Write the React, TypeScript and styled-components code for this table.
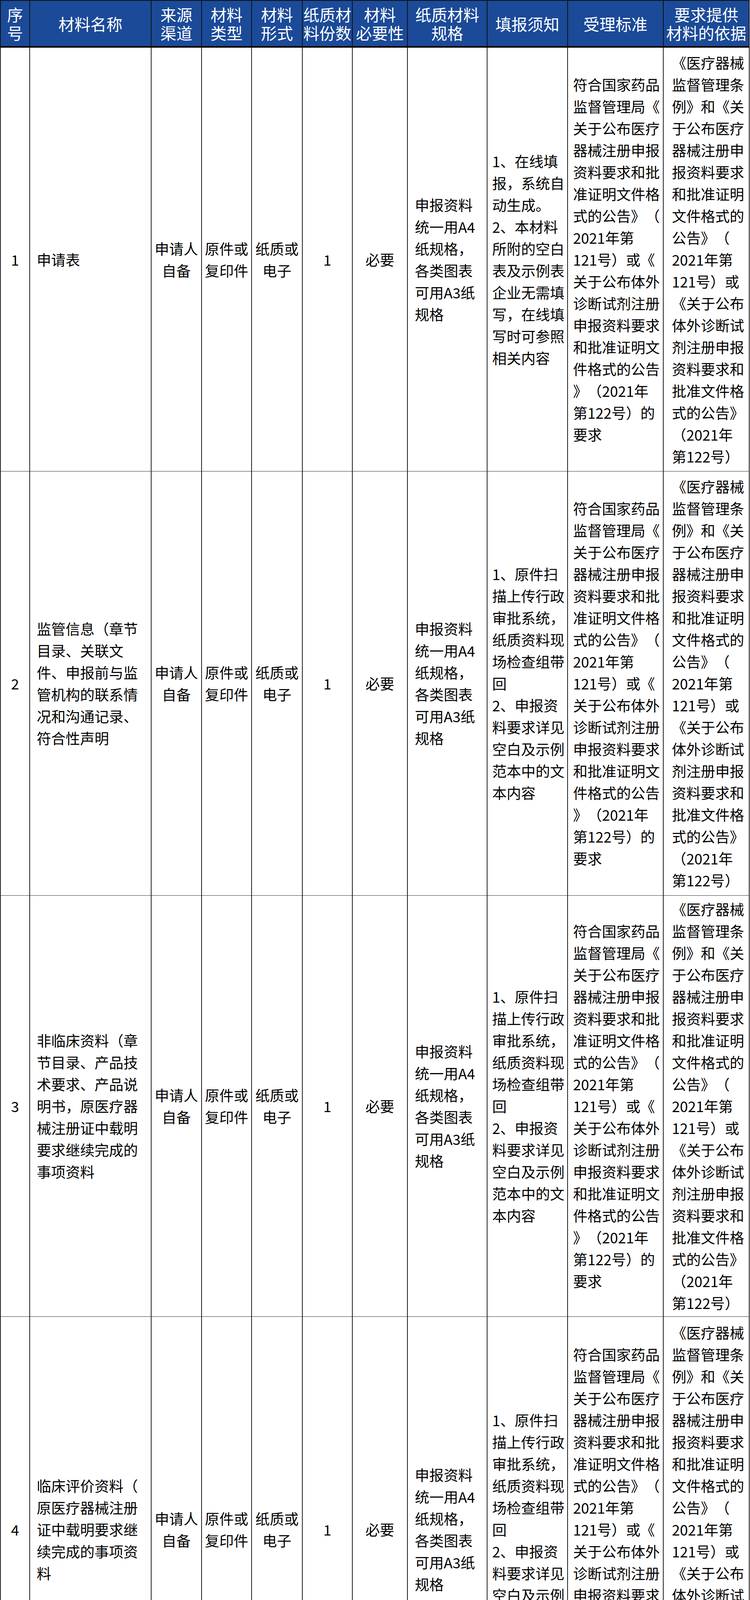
import React from 'react'
import styled, { createGlobalStyle } from 'styled-components'

type Align = 'left' | 'center'

type Column = { title: string[]; width: number; align: Align; pad: number }

type Material = {
  no: string
  name: string[]
  notes: string[]
  height: number
}

const columns: Column[] = [
  { title: ['序', '号'], width: 75, align: 'center', pad: 0 },
  { title: ['材料名称'], width: 311, align: 'left', pad: 17 },
  { title: ['来源', '渠道'], width: 129, align: 'center', pad: 0 },
  { title: ['材料', '类型'], width: 128, align: 'center', pad: 0 },
  { title: ['材料', '形式'], width: 130, align: 'center', pad: 0 },
  { title: ['纸质材', '料份数'], width: 128, align: 'center', pad: 0 },
  { title: ['材料', '必要性'], width: 141, align: 'center', pad: 0 },
  { title: ['纸质材料', '规格'], width: 204, align: 'left', pad: 18 },
  { title: ['填报须知'], width: 206, align: 'left', pad: 12 },
  { title: ['受理标准'], width: 245, align: 'left', pad: 13 },
  { title: ['要求提供', '材料的依据'], width: 220, align: 'left', pad: 21 },
]

const source = ['申请人', '自备']
const kind = ['原件或', '复印件']
const form = ['纸质或', '电子']
const copies = ['1']
const necessity = ['必要']
const spec = ['申报资料', '统一用A4', '纸规格，', '各类图表', '可用A3纸', '规格']

const standard = [
  '符合国家药品',
  '监督管理局《',
  '关于公布医疗',
  '器械注册申报',
  '资料要求和批',
  '准证明文件格',
  '式的公告》（',
  '2021年第',
  '121号）或《',
  '关于公布体外',
  '诊断试剂注册',
  '申报资料要求',
  '和批准证明文',
  '件格式的公告',
  '》（2021年',
  '第122号）的',
  '要求',
]

const basis = [
  '《医疗器械',
  '监督管理条',
  '例》和《关',
  '于公布医疗',
  '器械注册申',
  '报资料要求',
  '和批准证明',
  '文件格式的',
  '公告》（',
  '2021年第',
  '121号）或',
  '《关于公布',
  '体外诊断试',
  '剂注册申报',
  '资料要求和',
  '批准文件格',
  '式的公告》',
  '（2021年',
  '第122号）',
]

const onlineNotes = [
  '1、在线填',
  '报，系统自',
  '动生成。',
  '2、本材料',
  '所附的空白',
  '表及示例表',
  '企业无需填',
  '写，在线填',
  '写时可参照',
  '相关内容',
]

const scanNotes = [
  '1、原件扫',
  '描上传行政',
  '审批系统，',
  '纸质资料现',
  '场检查组带',
  '回',
  '2、申报资',
  '料要求详见',
  '空白及示例',
  '范本中的文',
  '本内容',
]

const materials: Material[] = [
  { no: '1', name: ['申请表'], notes: onlineNotes, height: 1086 },
  {
    no: '2',
    name: ['监管信息（章节', '目录、关联文', '件、申报前与监', '管机构的联系情', '况和沟通记录、', '符合性声明'],
    notes: scanNotes,
    height: 1086,
  },
  {
    no: '3',
    name: [
      '非临床资料（章',
      '节目录、产品技',
      '术要求、产品说',
      '明书，原医疗器',
      '械注册证中载明',
      '要求继续完成的',
      '事项资料',
    ],
    notes: scanNotes,
    height: 1078,
  },
  {
    no: '4',
    name: ['临床评价资料（', '原医疗器械注册', '证中载明要求继', '续完成的事项资', '料'],
    notes: scanNotes,
    height: 1090,
  },
]

const GlobalStyle = createGlobalStyle`
  html, body {
    margin: 0;
    padding: 0;
    background: #ffffff;
  }
  body {
    font-family: "Noto Sans CJK SC", "Noto Sans", "Liberation Sans", sans-serif;
    color: #000000;
  }
`

const Sheet = styled.table`
  border-collapse: collapse;
  table-layout: fixed;
  width: 1917px;
  text-spacing-trim: space-all;
`

const HeadRow = styled.tr`
  height: 119px;
`

const HeadCell = styled.th`
  background: #1b4a98;
  color: #ffffff;
  font-size: 41px;
  line-height: 47px;
  font-weight: 400;
  text-align: center;
  vertical-align: middle;
  white-space: nowrap;
  padding: 0;
  border: 2px solid #111111;
  border-bottom: 4px solid #000000;
`

const BodyRow = styled.tr<{ $height: number }>`
  height: ${(p) => p.$height}px;
`

const Cell = styled.td<{ $align: Align; $pad: number }>`
  font-size: 37px;
  line-height: 56px;
  text-align: ${(p) => p.$align};
  padding: 3px 0 3px ${(p) => p.$pad}px;
  vertical-align: middle;
  white-space: nowrap;
  border-left: 2px solid #1e1e1e;
  border-right: 2px solid #1e1e1e;
  border-top: 1px solid #333333;
  border-bottom: 1px solid #333333;
`

const Line = styled.span`
  display: block;
`

function Lines(props: { lines: string[] }) {
  return (
    <>
      {props.lines.map((line, i) => (
        <Line key={i}>{line}</Line>
      ))}
    </>
  )
}

function Title(props: { lines: string[] }) {
  return (
    <>
      {props.lines.map((line, i) => (
        <React.Fragment key={i}>
          {i > 0 && <br />}
          {line}
        </React.Fragment>
      ))}
    </>
  )
}

function MaterialRow(props: { item: Material }) {
  const cells = [
    [props.item.no],
    props.item.name,
    source,
    kind,
    form,
    copies,
    necessity,
    spec,
    props.item.notes,
    standard,
    basis,
  ]
  return (
    <BodyRow $height={props.item.height}>
      {cells.map((lines, i) => (
        <Cell key={i} $align={columns[i].align} $pad={columns[i].pad}>
          <Lines lines={lines} />
        </Cell>
      ))}
    </BodyRow>
  )
}

export default function App() {
  return (
    <>
      <GlobalStyle />
      <Sheet>
        <colgroup>
          {columns.map((col, i) => (
            <col key={i} style={{ width: col.width }} />
          ))}
        </colgroup>
        <thead>
          <HeadRow>
            {columns.map((col, i) => (
              <HeadCell key={i}>
                <Title lines={col.title} />
              </HeadCell>
            ))}
          </HeadRow>
        </thead>
        <tbody>
          {materials.map((item) => (
            <MaterialRow key={item.no} item={item} />
          ))}
        </tbody>
      </Sheet>
    </>
  )
}
